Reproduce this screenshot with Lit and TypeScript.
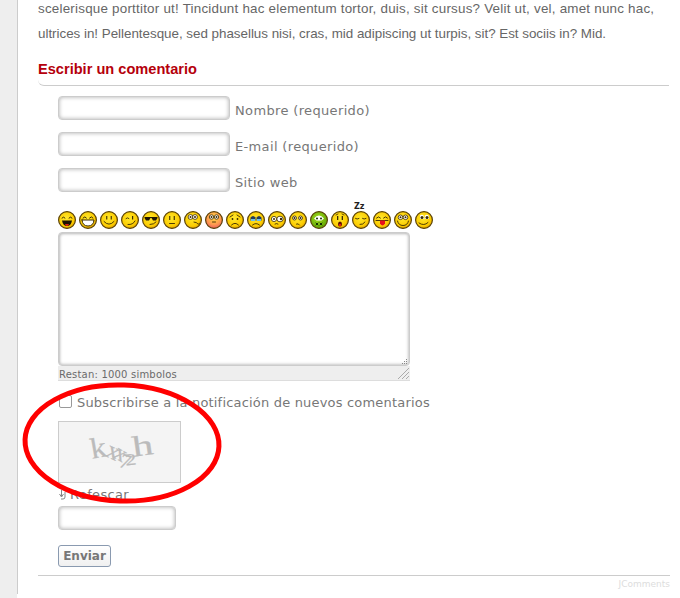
import { LitElement, html, css, svg } from "lit";
import { customElement } from "lit/decorators.js";

const D = "#3a2a00";
const line = (d: string, w = 1, c = D) => svg`<path d=${d} fill="none" stroke=${c} stroke-width=${w} stroke-linecap="round"/>`;
const fill = (d: string, c = D) => svg`<path d=${d} fill=${c}/>`;
const dot = (x: number, y: number, r = 1.2, c = D) => svg`<circle cx=${x} cy=${y} r=${r} fill=${c}/>`;
const eye = (x: number, y: number, r = 2.4) => svg`<ellipse cx=${x} cy=${y} rx=${r} ry=${r} fill="#fff" stroke=${D} stroke-width=".8"/><circle cx=${x} cy=${y} r="1" fill=${D}/>`;

type Sm = { f: unknown; grad?: string; top?: boolean };
const smileys: Sm[] = [
  { f: [line("M4 7q1.5-2 3 0"), line("M11 7q1.5-2 3 0"), fill("M4 9.5h10q-1 5.5-5 5.5t-5-5.5z", "#1c1200"), fill("M7 13h4q-.5 2-2 2t-2-2z", "#e02010")] },
  { f: [line("M4 7q2-2.5 3.5 0"), line("M10.5 7q2-2.5 3.5 0"), fill("M3 9h12q-.5 6-6 6t-6-6z", "#fff"), line("M3 9h12q-.5 6-6 6t-6-6z", 1)] },
  { f: [fill("M6.2 5h1.1v3.5H6.2z"), fill("M10.7 5h1.1v3.5h-1.1z"), line("M4 10.5q5 5.5 10 0", .9)] },
  { f: [line("M5 7.5q1.5-1.5 3 0", .9), fill("M11 5h1.2v3.5H11z"), line("M7 13.5q5 .5 7-3.5", .9)] },
  { f: [fill("M2.5 6h13v1l-1.5 2.5h-3L9.5 7h-1L7 9.5H4L2.5 7z", "#201500"), line("M8 13.5q4 0 6-2.5", .9)] },
  { f: [fill("M6.2 5h1.1v4H6.2z"), fill("M10.7 5h1.1v4h-1.1z"), line("M6.5 12.5h5", .9)] },
  { f: [eye(6.5, 6), eye(11, 6), line("M10 11q3 0 4 2", .9), dot(15.5, 13, 1.2, "#7a5a00")] },
  { grad: "b", f: [eye(6.5, 6, 2.2), eye(11.5, 6, 2.2), line("M7.5 11h3", .9)] },
  { f: [line("M4 6l3-2", .9), line("M14 6l-3-2", .9), dot(6.5, 8, .9), dot(11.5, 8, .9), line("M5.5 14q3.5-3.5 7 0", .9)] },
  { f: [fill("M3.5 6.5q2.5-3 5 0v3q-2.5 1-5 0z", "#243a5a"), fill("M9.5 6.5q2.5-3 5 0v3q-2.5 1-5 0z", "#243a5a"), fill("M4 8h4v2H4zM10 8h4v2h-4z", "#6cc0ee"), line("M5.5 14q3.5-3 7 0", .9)] },
  { f: [eye(6, 8, 2.6), svg`<ellipse cx="12" cy="8" rx="3.2" ry="2.8" fill="#fff" stroke=${D} stroke-width=".8"/>`, dot(13, 8), line("M7 13q1.5-1 3 0", .9)] },
  { f: [eye(5.5, 7, 2), eye(11.5, 7, 2), line("M7.5 13q2-1 3 1", .9)] },
  { grad: "g", f: [fill("M4 7.5q5-6 10 0l-2.5 2h-5z", "#fff"), dot(7, 7.5, 1, "#153000"), dot(11, 7.5, 1, "#153000"), line("M6 12l2 2M8 12l-2 2M10 12l2 2M12 12l-2 2", 1, "#153000")] },
  { f: [fill("M6 5h1.3v4H6z"), fill("M10.7 5H12v4h-1.3z"), line("M5 4l2-1M13 4l-2-1", .8), svg`<ellipse cx="9" cy="13" rx="2" ry="2.6" fill="#5a0d00"/>`, dot(9, 14, 1.2, "#e02010")] },
  { f: [line("M3.5 7.5q1.5 1.2 3.5 0", .9), line("M10.5 7.5q1.5 1.2 3.5 0", .9), line("M8 13.5q3 .5 5-2.5", .9)], top: true },
  { f: [line("M3.5 7q2-2.5 4 0", .9), line("M10.5 7q2-2.5 4 0", .9), line("M3 9.5h12", .9), fill("M7 9.5h5v3q-2.5 4-5 0z", "#e8101c")] },
  { f: [eye(6.5, 6.3, 2.3), eye(11.5, 6.3, 2.3), line("M3.5 10q1 4.5 5.5 4.5t5.5-4.5", .9)] },
  { f: [fill("M5 4.5q2-1.5 3.5 0l.5 3.5H5z", "#fff"), fill("M10 4.5q2-1.5 3.5 0L14 8H9.6z", "#fff"), dot(7, 6.5, 1.5), dot(12, 6.5, 1.5), line("M4 12q5 3.5 9-.5", .9)] },
];

const captchaGlyphs: [string, number, number, number, number, number, number][] = [
  ["k", 91, 459, -10, 30, 1.1, 1],
  ["x", 104, 456, 25, 26, 1, 1],
  ["x", 112, 457, 30, 24, 1, 1],
  ["7", 118, 467, 18, 22, 1, 1],
  ["2", 126, 466, -6, 21, 1.1, .8],
  ["h", 134, 457, -8, 30, 1.45, 1],
];

@customElement("app-root")
export class AppRoot extends LitElement {
  static styles = css`
    :host { display: block; width: 680px; height: 598px; overflow: hidden; position: relative; background: #fff; }
    .page { border-left: 1px solid #ccc; margin-left: 17px; box-sizing: border-box; height: 598px; padding: 0 10px 0 20px; }
    .rail { position: absolute; left: 0; top: 0; bottom: 0; width: 17px; background: #eee; }
    .copy { margin: -4px 0 0; font: 13.4px/25px "Liberation Sans", Arial, sans-serif; color: #666; white-space: nowrap; }
    .l1 { letter-spacing: .22px; }
    .l2 { letter-spacing: -.02px; }
    h4 { margin: 14px 0 0; font: bold 14.6px/18px "Liberation Sans", Arial, sans-serif; color: #b5000c; height: 26px; box-sizing: border-box; border-bottom: 1px solid #ccc; border-radius: 0 0 0 6px; width: 631px; }
    form { padding-left: 20px; font: 13px/16px "DejaVu Sans", Verdana, sans-serif; color: #777; letter-spacing: .35px; }
    .rows { display: flex; flex-direction: column; gap: 12px; padding-top: 10px; }
    .row { display: flex; align-items: center; gap: 5px; height: 24px; }
    .input { box-sizing: border-box; width: 172px; height: 24px; border: 1px solid #ccc; border-radius: 4px; background: #fff; box-shadow: inset 0 0 4px #aaa; }
    .row span { position: relative; top: 3px; }
    .smileys { display: flex; gap: 3px; margin-top: 19px; height: 21px; }
    .sm { width: 18px; height: 18px; position: relative; flex: none; }
    .sm svg { display: block; }
    .zz { position: absolute; left: 2px; top: -8px; font: bold 8px/8px "DejaVu Sans", sans-serif; color: #222; letter-spacing: 0; }
    .area { box-sizing: border-box; width: 352px; height: 134px; border: 1px solid #ccc; border-radius: 4px; background: #fff; box-shadow: inset 1px 1px 3px #bbb, inset -1px -1px 3px #ccc; position: relative; }
    .grip { position: absolute; right: 1px; bottom: 1px; }
    .status { box-sizing: border-box; width: 352px; height: 15px; background: #eee; border-bottom: 1px solid #ddd; font-size: 10px; line-height: 17px; padding-left: 1px; letter-spacing: .2px; color: #6a6a6a; position: relative; white-space: nowrap; }
    .status svg { position: absolute; right: 0; bottom: 0; }
    .sub { display: flex; align-items: center; gap: 5px; margin-top: 14px; height: 13px; }
    .check { box-sizing: border-box; width: 13px; height: 13px; border: 1px solid #999; border-radius: 2px; margin-left: 1px; background: #fff; flex: none; }
    .sub span { white-space: nowrap; letter-spacing: .19px; position: relative; top: 1px; }
    .captcha { display: block; margin-top: 13px; box-sizing: border-box; width: 123px; height: 62px; background: #f4f4f4; border: 1px solid #ccc; }
    .captcha text { font-family: "Liberation Serif", serif; fill: #bbb; stroke: #bbb; stroke-width: .25; letter-spacing: 0; }
    .refresh { display: flex; align-items: center; gap: 2px; margin-top: 4px; height: 16px; }
    .small { box-sizing: border-box; width: 118px; height: 24px; margin-top: 3px; border: 1px solid #ccc; border-radius: 4px; background: #fff; box-shadow: inset 0 0 4px #aaa; }
    .btn { box-sizing: border-box; display: block; margin-top: 15px; width: 53px; height: 22px; padding: 0; border: 1px solid #8a9ab0; border-radius: 3px; background: linear-gradient(#fff, #f0f0f0); font: bold 12px/20px "DejaVu Sans", Verdana, sans-serif; color: #777; letter-spacing: 0; text-align: center; }
    .foot { margin: 8px 0 0 -20px; width: 632px; border-top: 1px solid #ccc; text-align: right; font: 9px/16px "DejaVu Sans", Verdana, sans-serif; color: #ddd; letter-spacing: 0; }
    .ring { position: absolute; left: 0; top: 0; pointer-events: none; }
  `;

  private face(s: Sm, i: number) {
    const g = s.grad === "g" ? "gg" : s.grad === "b" ? "gb" : "gy";
    return html`<div class="sm">
      ${s.top ? html`<span class="zz">Zz</span>` : ""}
      <svg width="18" height="18" viewBox="0 0 18 18" data-i=${i}>
        <defs>
          <radialGradient id="gy" cx=".45" cy=".4" r=".65"><stop offset="0" stop-color="#ffe830"/><stop offset=".7" stop-color="#fccc00"/><stop offset="1" stop-color="#d89400"/></radialGradient>
          <radialGradient id="gg" cx=".45" cy=".4" r=".65"><stop offset="0" stop-color="#a8e020"/><stop offset="1" stop-color="#5aa000"/></radialGradient>
          <radialGradient id="gb" cx=".5" cy=".35" r=".7"><stop offset="0" stop-color="#ffd840"/><stop offset=".6" stop-color="#ff9a50"/><stop offset="1" stop-color="#e85060"/></radialGradient>
        </defs>
        <circle cx="9" cy="9" r="8.4" fill="url(#${g})" stroke="#5a4208" stroke-width="1.2"/>
        ${s.f}
      </svg>
    </div>`;
  }

  render() {
    return html`
      <div class="rail"></div>
      <div class="page">
        <div class="copy">
          <div class="l1">scelerisque porttitor ut! Tincidunt hac elementum tortor, duis, sit cursus? Velit ut, vel, amet nunc hac,</div>
          <div class="l2">ultrices in! Pellentesque, sed phasellus nisi, cras, mid adipiscing ut turpis, sit? Est sociis in? Mid.</div>
        </div>
        <h4>Escribir un comentario</h4>
        <form>
          <div class="rows">
            <div class="row"><div class="input"></div><span>Nombre (requerido)</span></div>
            <div class="row"><div class="input"></div><span>E-mail (requerido)</span></div>
            <div class="row"><div class="input"></div><span>Sitio web</span></div>
          </div>
          <div class="smileys">${smileys.map((s, i) => this.face(s, i))}</div>
          <div class="area">
            <svg class="grip" width="6" height="6" viewBox="0 0 6 6"><path d="M4 1h1v1H4zM2 3h1v1H2zM4 3h1v1H4zM0 5h1v1H0zM2 5h1v1H2zM4 5h1v1H4z" fill="#888"/></svg>
          </div>
          <div class="status">Restan: 1000 simbolos
            <svg width="13" height="13" viewBox="0 0 13 13"><path d="M12 1L1 12M12 5l-7 7M12 9l-3 3" stroke="#aaa" fill="none"/></svg>
          </div>
          <div class="sub"><div class="check"></div><span>Subscribirse a la notificación de nuevos comentarios</span></div>
          <svg class="captcha" width="123" height="62" viewBox="58 421 123 62">
            ${captchaGlyphs.map(([c, x, y, r, s, sx, sy]) => svg`<text x="0" y="0" style="font-size:${s}px" transform="translate(${x} ${y}) rotate(${r}) scale(${sx} ${sy})">${c}</text>`)}
          </svg>
          <div class="refresh">
            <svg width="10" height="12" viewBox="0 0 10 12"><path d="M3.5 1v6M1.5 5l2 3 2-3M7 3v5q0 2-2 2H3" fill="none" stroke="#777" stroke-width=".9"/></svg>
            <span>Refescar</span>
          </div>
          <div class="small"></div>
          <button class="btn" type="button">Enviar</button>
          <div class="foot">JComments</div>
        </form>
      </div>
      <svg class="ring" width="680" height="598" viewBox="0 0 680 598">
        <ellipse cx="122" cy="443" rx="97" ry="58" fill="none" stroke="#ff0000" stroke-width="5" transform="rotate(2 122 443)"/>
      </svg>
    `;
  }
}
